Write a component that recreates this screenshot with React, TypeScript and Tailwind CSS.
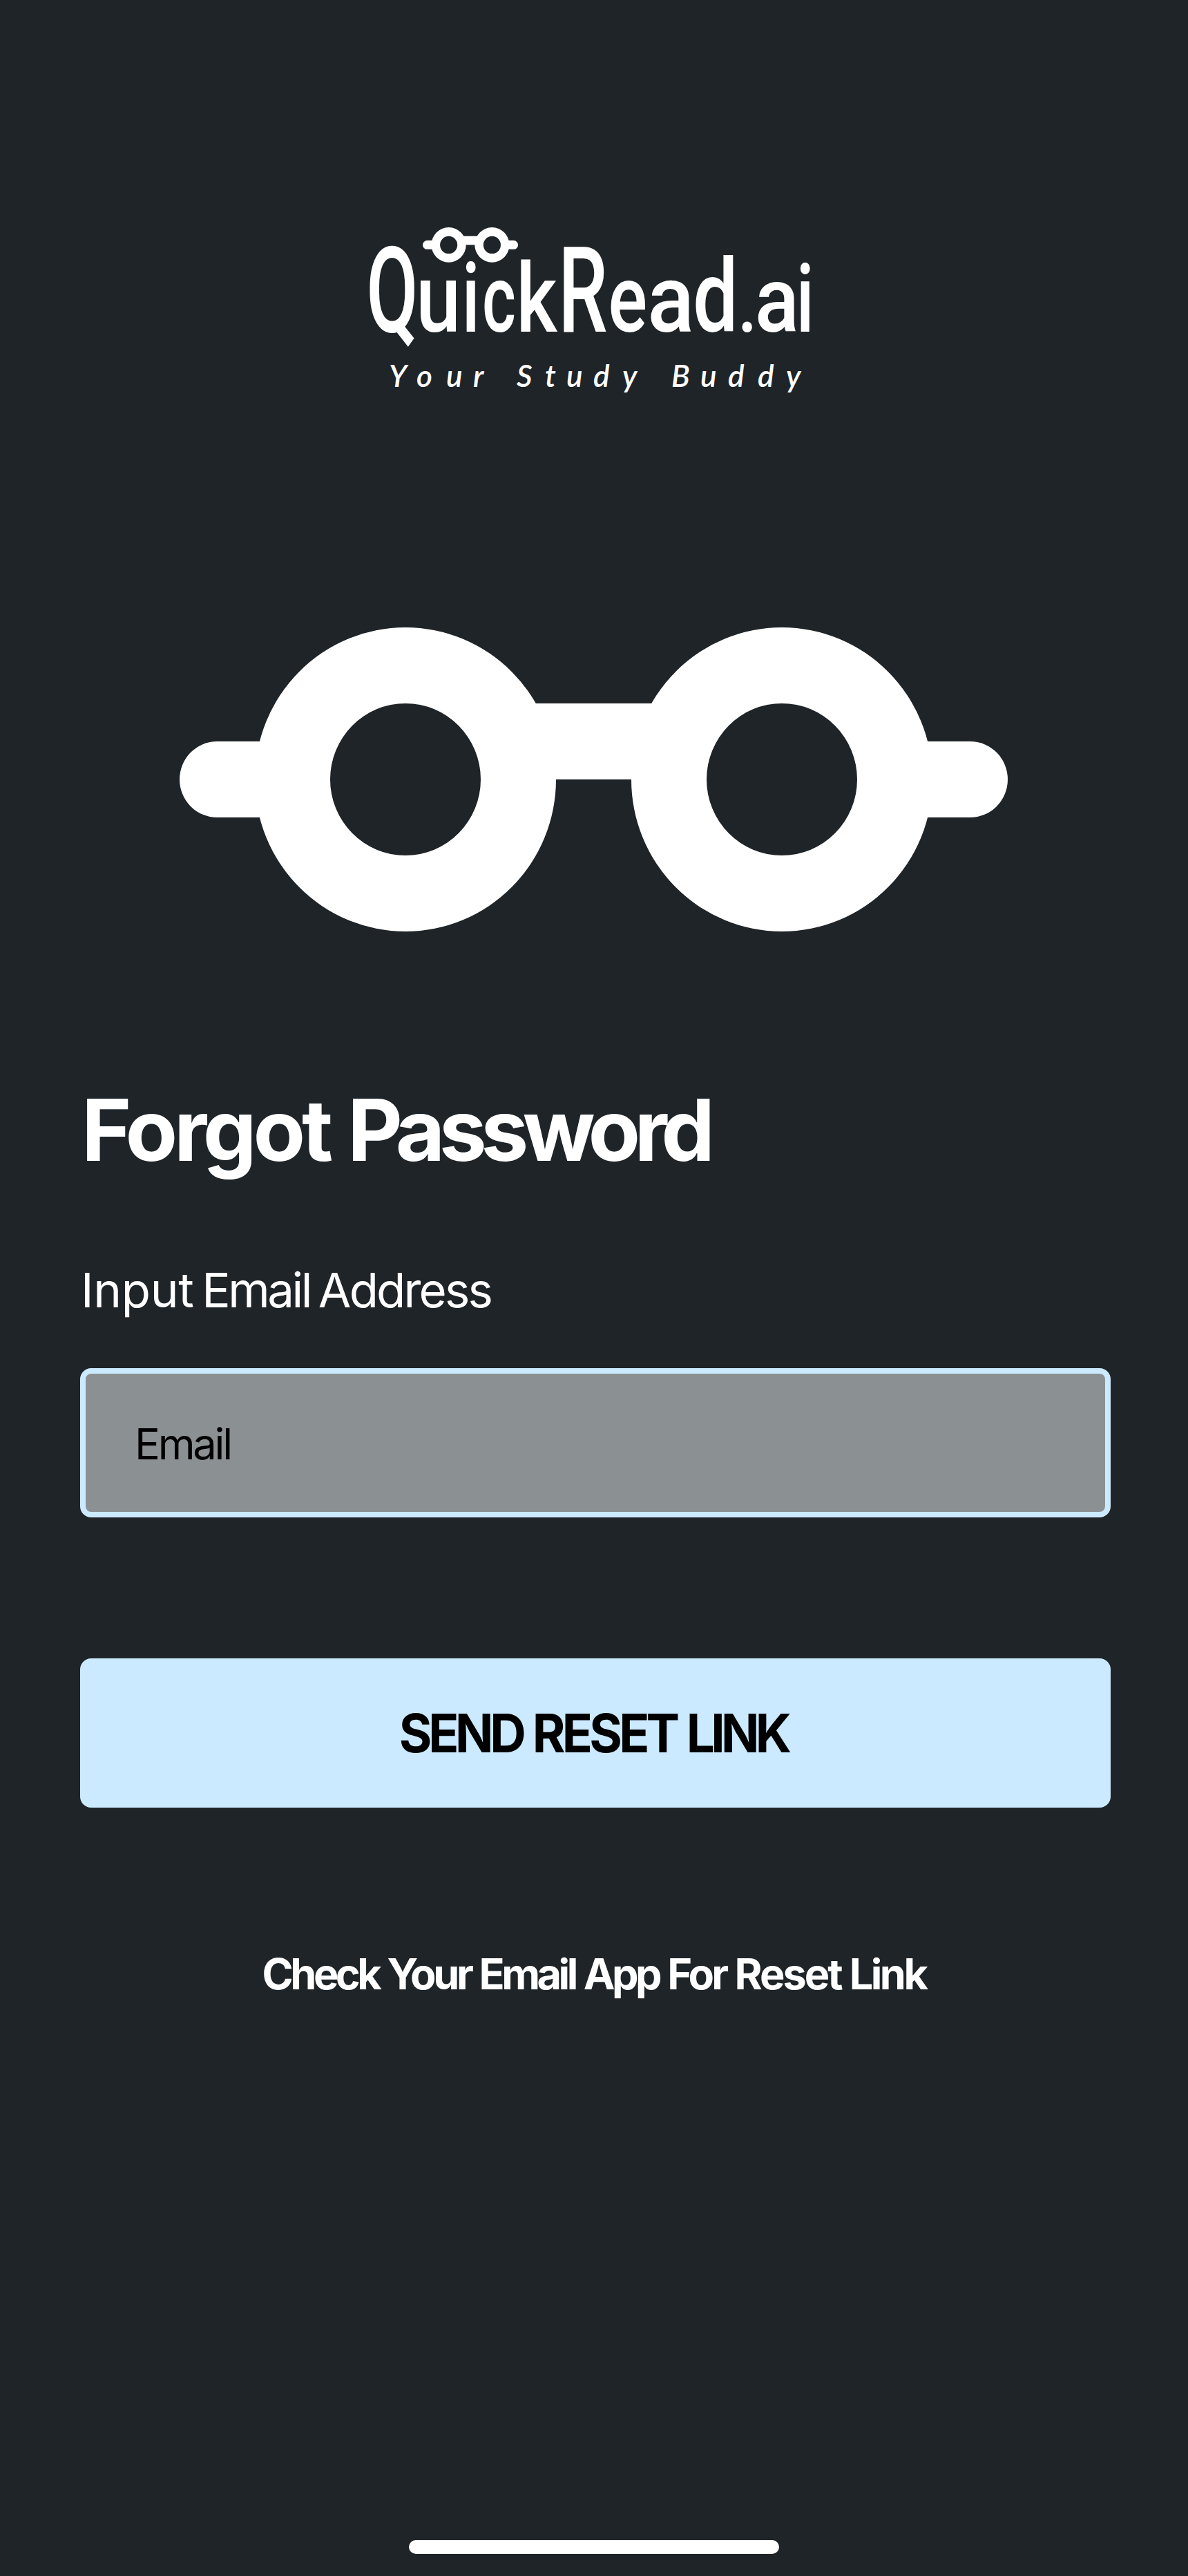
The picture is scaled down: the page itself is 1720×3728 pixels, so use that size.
type Glyph = { ch: string; from: number; to: number; size: number; l: number; r: number };

// Wordmark letters: horizontal extent on the canvas plus the side bearings of each glyph (em).
const WORDMARK: Glyph[] = [
  { ch: 'Q', from: 536, to: 600, size: 172, l: 0.05, r: 0.64 },
  { ch: 'u', from: 609, to: 659, size: 139, l: 0.057, r: 0.487 },
  { ch: 'i', from: 675, to: 688, size: 139, l: 0.062, r: 0.19 },
  { ch: 'c', from: 702, to: 744, size: 137, l: 0.042, r: 0.49 },
  { ch: 'k', from: 755, to: 807, size: 139, l: 0.066, r: 0.525 },
  { ch: 'R', from: 817, to: 877, size: 173, l: 0.077, r: 0.605 },
  { ch: 'e', from: 885, to: 934, size: 137, l: 0.042, r: 0.505 },
  { ch: 'a', from: 943, to: 999, size: 137, l: 0.045, r: 0.49 },
  { ch: 'd', from: 1008, to: 1061, size: 146, l: 0.042, r: 0.498 },
  { ch: '.', from: 1075, to: 1089, size: 120, l: 0.07, r: 0.205 },
  { ch: 'a', from: 1098, to: 1151, size: 133, l: 0.045, r: 0.49 },
  { ch: 'i', from: 1159, to: 1172, size: 137, l: 0.062, r: 0.19 },
];

function GlassesShape() {
  return (
    <>
      <path
        fillRule="evenodd"
        d="M1 2a2 2 0 1 0 4 0a2 2 0 1 0 -4 0ZM2 2a1 1 0 1 0 2 0a1 1 0 1 0 -2 0Z"
      />
      <path
        fillRule="evenodd"
        d="M6 2a2 2 0 1 0 4 0a2 2 0 1 0 -4 0ZM7 2a1 1 0 1 0 2 0a1 1 0 1 0 -2 0Z"
      />
      <path d="M1.2 1.5H.5a.5.5 0 0 0 0 1H1.2Z" />
      <path d="M9.8 1.5H10.5a.5.5 0 0 1 0 1H9.8Z" />
      <path d="M4.6 1H6.4V2H4.6Z" />
    </>
  );
}

function Logo() {
  return (
    <svg
      viewBox="532 320 648 270"
      className="ml-[532px] block h-[270px] w-[648px] fill-white"
      role="img"
      aria-label="QuickRead.ai – Your Study Buddy"
    >
      <g transform="translate(612 329) scale(12.55 12.7)">
        <GlassesShape />
      </g>
      <g className="font-['Roboto',sans-serif] font-medium">
        {WORDMARK.map((g) => {
          const sx = (g.to - g.from) / ((g.r - g.l) * g.size);
          return (
            <text
              key={g.from}
              fontSize={g.size}
              transform={`translate(${g.from - g.l * g.size * sx} 480) scale(${sx} 1)`}
            >
              {g.ch}
            </text>
          );
        })}
      </g>
      <text
        className="font-['Lato',sans-serif] font-semibold italic"
        fontSize="44"
        y="560"
        x="563 603 646 685 720 748 789 820 859 901 940 972 1014 1054 1097 1138"
      >
        Your Study Buddy
      </text>
    </svg>
  );
}

export default function App() {
  return (
    <main className="flex h-[3728px] w-[1720px] flex-col bg-[#1f2428] pt-[320px] pb-8 font-['Inter',sans-serif] text-white">
      <Logo />

      <svg
        viewBox="0 0 11 4"
        preserveAspectRatio="none"
        className="mt-[318px] ml-[260px] block h-[440px] w-[1199px] shrink-0 fill-white"
        aria-hidden="true"
      >
        <GlassesShape />
      </svg>

      <form className="mt-[207px] mr-[112px] ml-[116px] flex flex-col" onSubmit={(e) => e.preventDefault()}>
        <h1 className="pl-[2px] text-[123.4px] leading-[160px] font-bold whitespace-nowrap [word-spacing:-3px]">
          <span className="tracking-[-5.3px]">Forgot</span> <span className="tracking-[-8.6px]">Password</span>
        </h1>

        <label
          htmlFor="email"
          className="mt-[110px] pl-px text-[69px] leading-[84px] font-normal whitespace-nowrap [word-spacing:-7.5px]"
        >
          <span className="tracking-[-0.3px]">Input</span> <span className="tracking-[-3.5px]">Email</span>{' '}
          <span className="tracking-[-2.8px]">Address</span>
        </label>

        <input
          id="email"
          type="email"
          placeholder="Email"
          className="mt-[71px] h-[216px] w-full rounded-2xl border-8 border-[#cceaff] bg-[#8b9092] pt-[3px] pl-[71px] text-[61.5px] tracking-[-3.25px] text-black outline-none placeholder:text-black"
        />

        <button
          type="submit"
          className="mt-[204px] flex h-[216px] w-full items-center justify-center rounded-2xl bg-[#cceaff] pr-[5px] text-[76.6px] font-bold text-black"
        >
          <span className="inline-block scale-x-95 whitespace-nowrap [word-spacing:-3px]">
            <span className="tracking-[-5.6px]">SEND</span> <span className="tracking-[-5px]">RESET</span>{' '}
            <span className="tracking-[-6px]">LINK</span>
          </span>
        </button>

        <p className="mt-[203px] mr-1 text-center text-[61.2px] leading-[76px] font-bold whitespace-nowrap [word-spacing:-2.4px]">
          <span className="tracking-[-4.5px]">Check</span> <span className="tracking-[-4.4px]">Your</span>{' '}
          <span className="tracking-[-4.5px]">Email</span> <span className="tracking-[-4.5px]">App</span>{' '}
          <span className="tracking-[-3.8px]">For</span> <span className="tracking-[-3px]">Reset</span>{' '}
          <span className="tracking-[-3.5px]">Link</span>
        </p>
      </form>

      <div className="mx-auto mt-auto h-5 w-[536px] rounded-[10px] bg-white" />
    </main>
  );
}
